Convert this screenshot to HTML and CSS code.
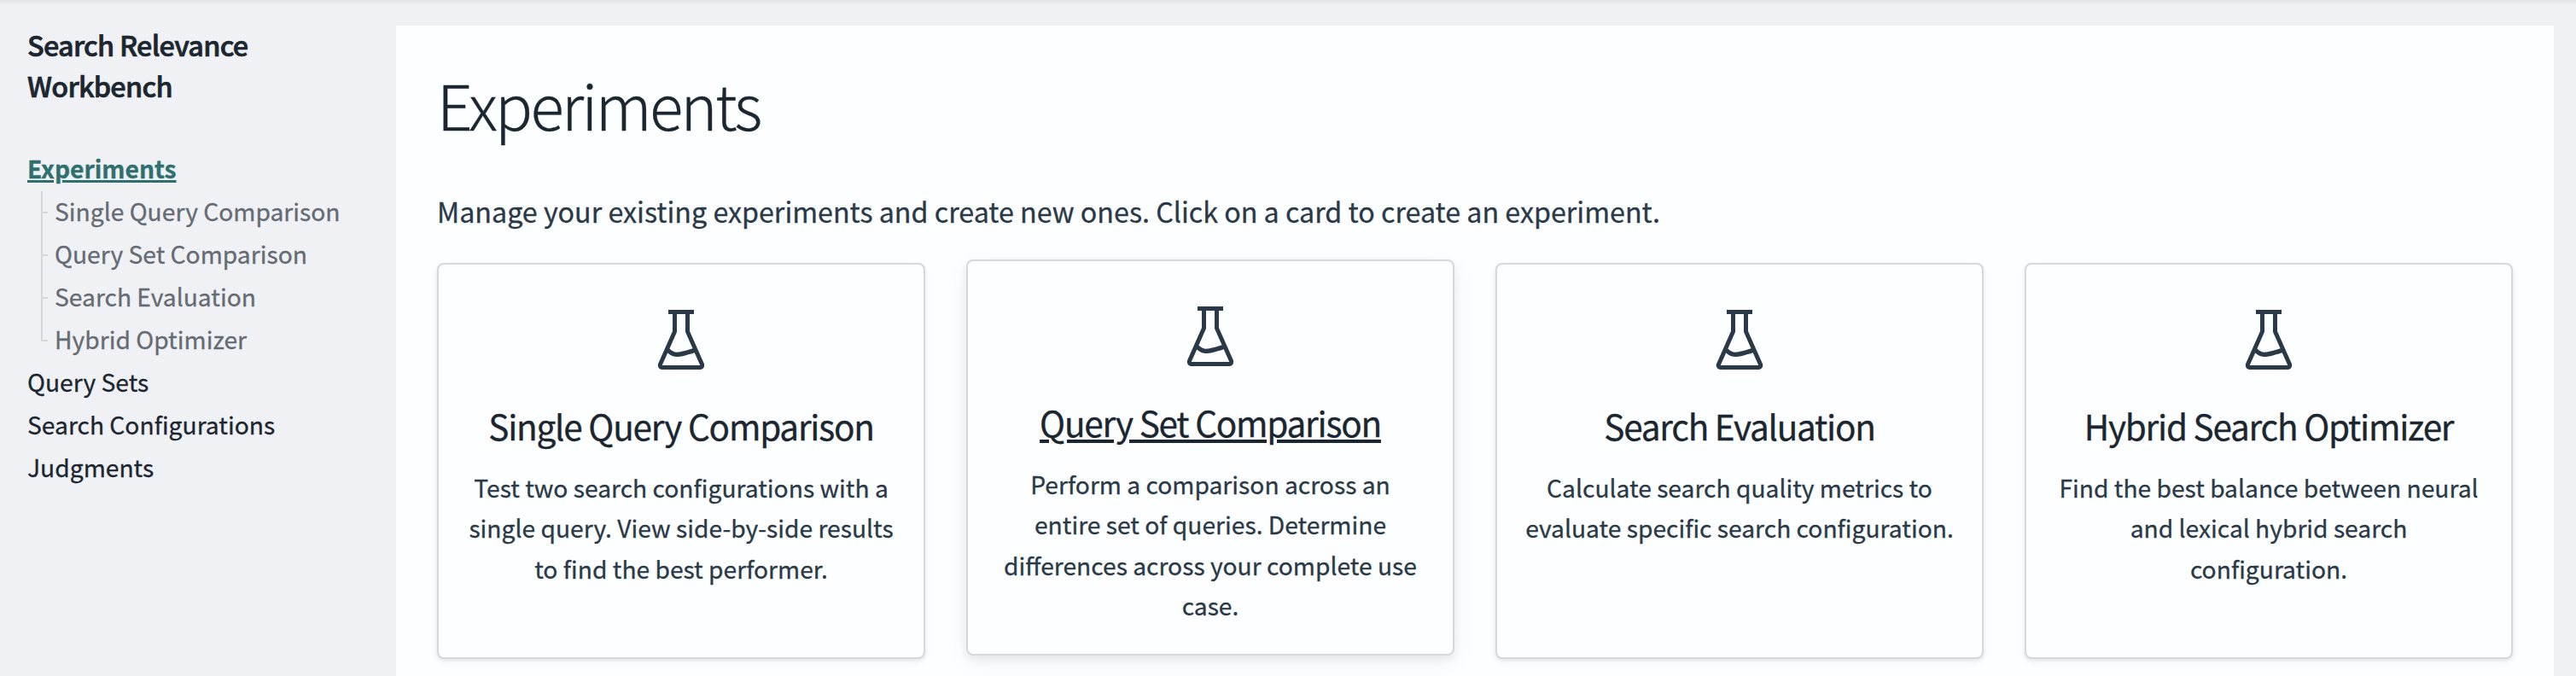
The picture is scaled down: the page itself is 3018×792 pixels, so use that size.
FILE: index.html
```html
<!DOCTYPE html>
<html lang="en">
<head>
<meta charset="utf-8">
<title>Experiments</title>
<link rel="stylesheet" href="styles.css">
</head>
<body>
<svg class="sprite" aria-hidden="true">
  <symbol id="beaker" viewBox="0 0 16 16">
    <path d="M5.277 10.088c.02.014.04.03.057.047.582.55 1.134.812 1.666.812.586 0 1.84-.293 3.713-.88L9 6.212V2H7v4.212l-1.723 3.876Zm-.438.987L3.539 14h8.922l-1.32-2.969C9.096 11.677 7.733 12 7 12c-.74 0-1.463-.315-2.161-.925ZM6 2H5V1h6v1h-1v4l3.375 7.594A1 1 0 0 1 12.461 15H3.54a1 1 0 0 1-.914-1.406L6 6V2Z"/>
  </symbol>
</svg>
<div class="app">
  <nav class="sidebar">
    <h2 class="sidebar-title">Search Relevance Workbench</h2>
    <ul class="nav">
      <li class="nav-item nav-item-active"><a>Experiments</a>
        <ul class="subnav">
          <li class="subnav-item">Single Query Comparison</li>
          <li class="subnav-item">Query Set Comparison</li>
          <li class="subnav-item">Search Evaluation</li>
          <li class="subnav-item">Hybrid Optimizer</li>
        </ul>
      </li>
      <li class="nav-item"><a>Query Sets</a></li>
      <li class="nav-item"><a>Search Configurations</a></li>
      <li class="nav-item"><a>Judgments</a></li>
    </ul>
  </nav>
  <main class="panel">
    <h1 class="page-title">Experiments</h1>
    <p class="lead">Manage your existing experiments and create new ones. Click on a card to create an experiment.</p>
    <div class="cards">
      <article class="card">
        <svg class="card-icon"><use href="#beaker"/></svg>
        <h3 class="card-title">Single Query Comparison</h3>
        <p class="card-text">Test two search configurations with a single query. View side-by-side results to find the best performer.</p>
      </article>
      <article class="card card-hover">
        <svg class="card-icon"><use href="#beaker"/></svg>
        <h3 class="card-title">Query Set Comparison</h3>
        <p class="card-text">Perform a comparison across an entire set of queries. Determine differences across your complete use case.</p>
      </article>
      <article class="card">
        <svg class="card-icon"><use href="#beaker"/></svg>
        <h3 class="card-title">Search Evaluation</h3>
        <p class="card-text">Calculate search quality metrics to evaluate specific search configuration.</p>
      </article>
      <article class="card">
        <svg class="card-icon"><use href="#beaker"/></svg>
        <h3 class="card-title">Hybrid Search Optimizer</h3>
        <p class="card-text">Find the best balance between neural and lexical hybrid search configuration.</p>
      </article>
    </div>
  </main>
</div>
</body>
</html>
```
FILE: styles.css
```css
* { box-sizing: border-box; margin: 0; padding: 0; }

body {
  background: #f0f1f4;
  color: #2a3947;
  font-family: "Noto Sans CJK JP", "Noto Sans", sans-serif;
  font-size: 28.23px;
  -webkit-text-stroke: 0.3px currentColor;
}

.sprite { display: none; }

.app {
  display: flex;
  height: 792px;
  padding: 30px 26px 0 0;
  overflow: hidden;
  background: linear-gradient(#e3e4e8 0, #e6e7ea 2px, #ecedf0 3px, #f0f1f4 10px);
}

.sidebar {
  width: 464px;
  flex: none;
  padding-left: 32px;
  margin-top: -2px;
}

.sidebar-title {
  width: 340px;
  margin-bottom: 48px;
  font-size: 32.4px;
  font-weight: 500;
  line-height: 48px;
  letter-spacing: -0.75px;
  color: #1b2630;
  -webkit-text-stroke: 0.7px #1b2630;
}

.nav, .subnav { list-style: none; }

.nav-item { line-height: 50px; color: #1b2630; }

.nav-item-active > a {
  color: #2f706e;
  font-weight: 700;
  text-decoration: underline;
  text-decoration-thickness: 3px;
  text-underline-offset: 2px;
}

.subnav { padding-left: 16px; }

.subnav-item {
  position: relative;
  padding-left: 16px;
  color: #656b73;
}

.subnav-item::before {
  content: "";
  position: absolute;
  left: 0;
  top: 2px;
  width: 2px;
  height: 50px;
  background: #d5d7da;
}

.subnav-item:last-child::before { height: 26px; }

.subnav-item::after {
  content: "";
  position: absolute;
  left: 2px;
  top: 26px;
  width: 6px;
  height: 2px;
  background: #d5d7da;
}

.panel {
  flex: 1;
  height: 800px;
  padding: 48px;
  background: #fdfeff;
}

.page-title {
  font-size: 72.9px;
  font-weight: 300;
  line-height: 87px;
  letter-spacing: -2.65px;
  color: #1b2630;
}

.lead {
  margin-top: 55px;
  font-size: 32.24px;
  line-height: 54px;
}

.cards {
  display: grid;
  grid-template-columns: repeat(4, 1fr);
  gap: 48px;
  margin-top: 34px;
}

.card {
  display: flex;
  flex-direction: column;
  align-items: center;
  height: 464px;
  padding: 48px 32px 0;
  border: 2px solid #d6d8db;
  border-radius: 8px;
  background: #fdfeff;
  box-shadow: 0 2px 4px rgba(27, 38, 48, 0.1), 0 4px 14px rgba(27, 38, 48, 0.03);
  text-align: center;
}

.card-hover {
  transform: translateY(-4px);
  box-shadow: 0 4px 8px rgba(27, 38, 48, 0.08), 0 8px 30px rgba(27, 38, 48, 0.05);
}

.card-icon {
  width: 80px;
  height: 80px;
  flex: none;
  fill: #2a3947;
  stroke: none;
}

.card-title {
  margin-top: 34px;
  font-size: 40.5px;
  font-weight: 400;
  line-height: 54px;
  letter-spacing: -1.25px;
  color: #1b2630;
}

.card-hover .card-title {
  text-decoration: underline;
  text-decoration-thickness: 4px;
  text-underline-offset: 3px;
}

.card-text {
  margin-top: 21px;
  line-height: 47.25px;
}
```
